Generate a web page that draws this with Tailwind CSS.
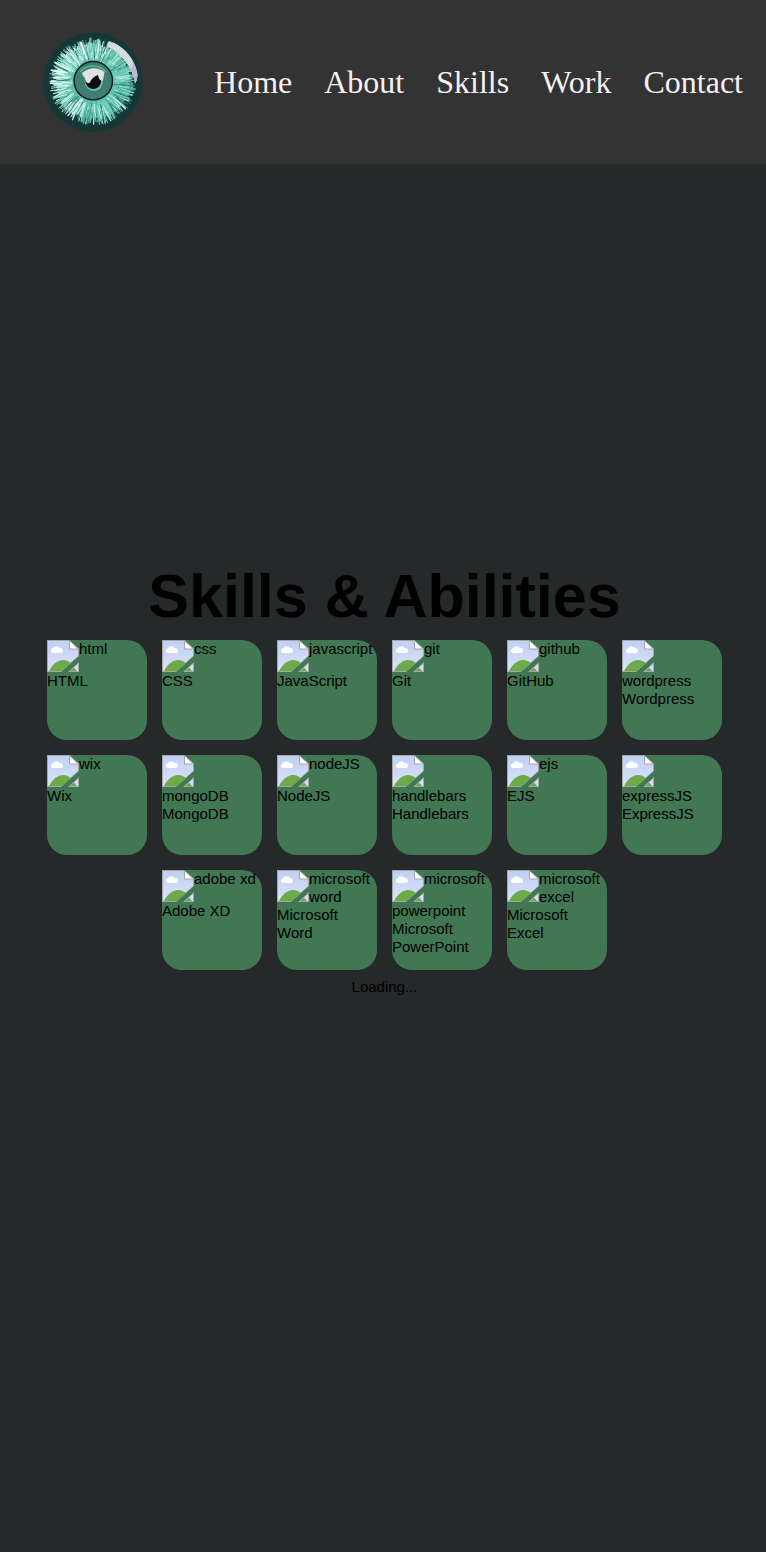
<!DOCTYPE html>
<html lang="en">
<head>
<meta charset="utf-8">
<meta name="viewport" content="width=device-width, initial-scale=1">
<title>Skills &amp; Abilities</title>
<script src="https://cdn.jsdelivr.net/npm/@tailwindcss/browser@4"></script>
</head>
<body class="flex min-h-screen flex-col bg-[#25292a] font-['Liberation_Sans',Arial,sans-serif] text-[15px] leading-[18px] text-black">
<svg class="absolute size-0" aria-hidden="true">
  <defs>
    <linearGradient id="sky" x1="0" y1="0" x2="0" y2="1"><stop offset="0" stop-color="#bfd0f3"/><stop offset="1" stop-color="#dbe3fa"/></linearGradient>
    <symbol id="picture" viewBox="0 0 32 32">
      <path d="M0 0H22L32 9V16L14 32H0Z" fill="#a5a5aa"/>
      <path d="M1 1H22V9H31V16L14 31H1Z" fill="url(#sky)"/>
      <path d="M2 31C5 25 10 20 16 20C19 20 21 21 24 23L15 31Z" fill="#6cab48"/>
      <path d="M32 22V32H21Z" fill="#a5a5aa"/>
      <path d="M31 24V31H23Z" fill="#d3def8"/>
      <path d="M23 31L27 27.500L30 31Z" fill="#6cab48"/>
      <path d="M22.500 .5L31.500 9H22.500Z" fill="#fff" stroke="#a5a5aa"/>
      <path d="M5.500 13A2.500 2.500 0 0 1 6 8.200A4 4 0 0 1 12.800 8A2.500 2.500 0 0 1 14 13Z" fill="#fff"/>
    </symbol>
  </defs>
</svg>
<header class="flex items-center justify-between bg-[#333] py-8 pr-[23px] pl-[43px]">
  <a href="#home" aria-label="Home page" class="shrink-0">
    <svg class="size-[100px]" viewBox="0 0 100 100" aria-hidden="true">
      <defs>
        <radialGradient id="iris"><stop offset="0" stop-color="#3c9183"/><stop offset=".72" stop-color="#68cbb9"/><stop offset="1" stop-color="#4aa99c"/></radialGradient>
      </defs>
      <circle cx="50" cy="50" r="49.500" fill="#143737"/>
      <circle cx="50" cy="49.500" r="37" fill="url(#iris)"/>
      <g id="fibres" fill="none"></g>
      <circle cx="50.300" cy="48.700" r="19.200" fill="#3e7e70" stroke="#101a1a" stroke-width="1.400"/>
      <path d="M37 40A17 17 0 0 1 63 40" fill="none" stroke="#5cae9d" stroke-width="1.500"/>
      <circle cx="50.800" cy="50" r="9" fill="#6bc5bb"/>
      <circle cx="50.300" cy="49.300" r="7.800" fill="#0b0c0c"/>
      <path d="M39 41Q50 32 61.500 40L60 48.500Q56 49.500 55 43Q49 45 46.500 51Q42.500 52 42 46Q40 45 39 41Z" fill="#dfe2e3"/>
      <path d="M65 10.500Q69 9 75 13Q91 23 94.500 43Q94.500 48 92 51.500Q88 28 66 15.500Q63 13 65 10.500Z" fill="#d4dbde"/>
      <path d="M89 28Q93.500 34 94.500 43Q94.500 48 92 51.500Q90.500 42 87 35Q91 38 89 28Z" fill="#bbb9cc"/>
    </svg>
  </a>
  <nav class="font-['Liberation_Serif','Times_New_Roman',serif] text-[32px] leading-9 text-[#f5f0f3]">
    <ul class="flex flex-wrap justify-end gap-x-8">
      <li><a href="#home">Home</a></li>
      <li><a href="#about">About</a></li>
      <li><a href="#skills">Skills</a></li>
      <li><a href="#work">Work</a></li>
      <li><a href="#contact">Contact</a></li>
    </ul>
  </nav>
</header>
<main id="skills" class="flex grow flex-col items-center pt-[396px] pl-[3px]">
  <h1 class="text-center text-[61px] leading-[72px] font-bold">Skills &amp; Abilities</h1>
  <ul class="mt-2 flex flex-wrap justify-center gap-[15px]">
    <li class="size-[100px] rounded-[20px] bg-[#417753]"><div class="flow-root"><svg class="float-left size-8" aria-hidden="true"><use href="#picture"/></svg>html</div><p>HTML</p></li>
    <li class="size-[100px] rounded-[20px] bg-[#417753]"><div class="flow-root"><svg class="float-left size-8" aria-hidden="true"><use href="#picture"/></svg>css</div><p>CSS</p></li>
    <li class="size-[100px] rounded-[20px] bg-[#417753]"><div class="flow-root"><svg class="float-left size-8" aria-hidden="true"><use href="#picture"/></svg>javascript</div><p>JavaScript</p></li>
    <li class="size-[100px] rounded-[20px] bg-[#417753]"><div class="flow-root"><svg class="float-left size-8" aria-hidden="true"><use href="#picture"/></svg>git</div><p>Git</p></li>
    <li class="size-[100px] rounded-[20px] bg-[#417753]"><div class="flow-root"><svg class="float-left size-8" aria-hidden="true"><use href="#picture"/></svg>github</div><p>GitHub</p></li>
    <li class="size-[100px] rounded-[20px] bg-[#417753]"><div class="flow-root"><svg class="float-left size-8" aria-hidden="true"><use href="#picture"/></svg><p class="clear-left">wordpress</p></div><p>Wordpress</p></li>
    <li class="size-[100px] rounded-[20px] bg-[#417753]"><div class="flow-root"><svg class="float-left size-8" aria-hidden="true"><use href="#picture"/></svg>wix</div><p>Wix</p></li>
    <li class="size-[100px] rounded-[20px] bg-[#417753]"><div class="flow-root"><svg class="float-left size-8" aria-hidden="true"><use href="#picture"/></svg><p class="clear-left">mongoDB</p></div><p>MongoDB</p></li>
    <li class="size-[100px] rounded-[20px] bg-[#417753]"><div class="flow-root"><svg class="float-left size-8" aria-hidden="true"><use href="#picture"/></svg>nodeJS</div><p>NodeJS</p></li>
    <li class="size-[100px] rounded-[20px] bg-[#417753]"><div class="flow-root"><svg class="float-left size-8" aria-hidden="true"><use href="#picture"/></svg><p class="clear-left">handlebars</p></div><p>Handlebars</p></li>
    <li class="size-[100px] rounded-[20px] bg-[#417753]"><div class="flow-root"><svg class="float-left size-8" aria-hidden="true"><use href="#picture"/></svg>ejs</div><p>EJS</p></li>
    <li class="size-[100px] rounded-[20px] bg-[#417753]"><div class="flow-root"><svg class="float-left size-8" aria-hidden="true"><use href="#picture"/></svg><p class="clear-left">expressJS</p></div><p>ExpressJS</p></li>
    <li class="size-[100px] rounded-[20px] bg-[#417753]"><div class="flow-root"><svg class="float-left size-8" aria-hidden="true"><use href="#picture"/></svg>adobe xd</div><p>Adobe XD</p></li>
    <li class="size-[100px] rounded-[20px] bg-[#417753]"><div class="flow-root"><svg class="float-left size-8" aria-hidden="true"><use href="#picture"/></svg>microsoft word</div><p>Microsoft Word</p></li>
    <li class="size-[100px] rounded-[20px] bg-[#417753]"><div class="flow-root"><svg class="float-left size-8" aria-hidden="true"><use href="#picture"/></svg>microsoft powerpoint</div><p>Microsoft PowerPoint</p></li>
    <li class="size-[100px] rounded-[20px] bg-[#417753]"><div class="flow-root"><svg class="float-left size-8" aria-hidden="true"><use href="#picture"/></svg>microsoft excel</div><p>Microsoft Excel</p></li>
  </ul>
  <p class="mt-2">Loading...</p>
</main>
<script>
// Radial fibres of the iris, from a fixed seed so that they are the same on each load.
let seed = 11;
const rnd = () => (seed = (seed * 16807) % 2147483647) / 2147483647;
const colours = ['#66cdbb', '#54b5a6', '#86dccb', '#2f786e', '#cdf3e6', '#5cc4b4'];
let out = '';
for (let i = 0; i < 620; i++) {
  const a = rnd() * Math.PI * 2, b = a + (rnd() - .5) * .12;
  const r1 = 20 + rnd() * 12, r2 = 35 + rnd() * 9;
  const bright = Math.cos(a + 2.7) > -.1 && rnd() > .5;
  const c = bright ? '#e4fff2' : colours[Math.floor(rnd() * colours.length)];
  out += `<path d="M${50 + r1 * Math.cos(a)} ${49.5 + r1 * Math.sin(a)}L${50 + r2 * Math.cos(b)} ${49.5 + r2 * Math.sin(b)}" stroke="${c}" stroke-width="${.5 + rnd() * .7}"/>`;
}
document.getElementById('fibres').innerHTML = out;
</script>
</body>
</html>
